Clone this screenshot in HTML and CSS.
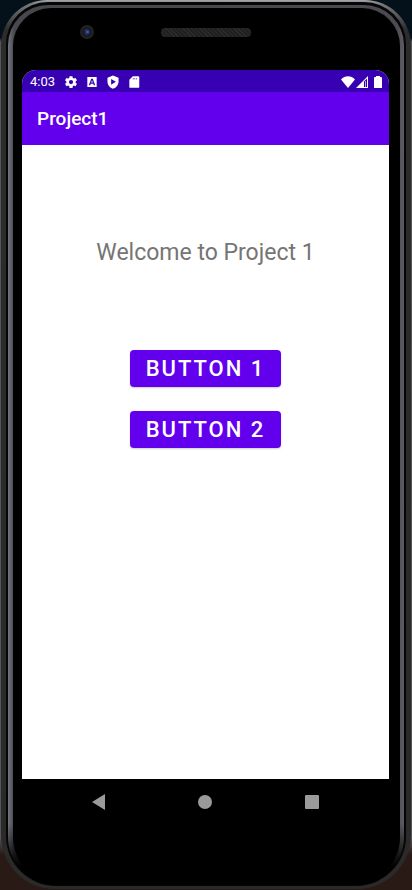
FILE: index.html
```html
<!DOCTYPE html>
<html lang="en">
<head>
<meta charset="utf-8">
<meta name="viewport" content="width=device-width, initial-scale=1">
<title>Project1</title>
<link rel="stylesheet" href="styles.css">
</head>
<body>
<div class="shell">
  <div class="groove">
    <div class="rim">
      <div class="face">
        <div class="earpiece">
          <svg class="camera" width="16" height="16" viewBox="0 0 16 16" aria-hidden="true">
            <circle cx="8" cy="8" r="7" fill="#222224"/>
            <circle cx="8" cy="8" r="4.600" fill="#141623"/>
            <circle cx="8" cy="8" r="3.200" fill="#1f2a52"/>
            <circle cx="8.400" cy="8" r="1.400" fill="#4a5790"/>
          </svg>
          <span class="speaker"></span>
        </div>
        <div class="screen">
          <div class="status">
            <span class="time">4:03</span>
            <div class="notices">
              <svg width="14" height="14" viewBox="0 0 24 24" aria-hidden="true"><path fill="#fff" fill-rule="evenodd" d="M9.500 2h5l.6 3 1.800 1 2.900-1 2.400 4.200-2.300 2v1.900l2.300 2-2.400 4.100-2.900-1-1.800 1-.6 3h-5l-.6-3-1.800-1-2.900 1-2.400-4.100 2.300-2v-1.900l-2.300-2 2.400-4.200 2.900 1 1.800-1zM12 8.500a3.600 3.600 0 1 0 0 7.200 3.600 3.600 0 0 0 0-7.200z"/></svg>
              <svg width="14" height="14" viewBox="0 0 24 24" aria-hidden="true"><path fill="#fff" fill-rule="evenodd" d="M4 3.500h16v17H4zM10.700 6.500 6.500 17.500h2.400l.9-2.500h4.400l.9 2.500h2.400L13.300 6.500zM12 9l1.500 4h-3z"/></svg>
              <svg width="14" height="14" viewBox="0 0 24 24" aria-hidden="true"><path fill="#fff" fill-rule="evenodd" d="M12 1 21.500 4.500V11c0 6-4 10.500-9.500 12.500C6.500 21.500 2.500 17 2.500 11V4.500zM8.800 6.800v9.800L17 11.700z"/></svg>
              <svg width="14" height="14" viewBox="0 0 24 24" aria-hidden="true"><path fill="#fff" fill-rule="evenodd" d="M10 2h9.500a1.500 1.500 0 0 1 1.500 1.500v17a1.500 1.500 0 0 1-1.500 1.500h-14A1.500 1.500 0 0 1 4 20.500V8zM10 5v2.500H11V5zM13 5v2.500h1V5zM16 5v2.500h1V5z"/></svg>
            </div>
            <div class="signals">
              <svg width="14" height="12" viewBox="0 0 14 12" aria-hidden="true"><path fill="#fff" d="M0 3.500C4-.8 10-.8 14 3.500L7 12z"/></svg>
              <svg width="12" height="12" viewBox="0 0 12 12" aria-hidden="true"><path fill="#fff" d="M0 12 12 0v12z"/><path fill="#3700b3" d="M8 5.500 11 2.500V11H8z"/><path fill="#fff" d="M9 5h1v6H9z" opacity=".65"/></svg>
              <svg class="battery" width="8" height="12" viewBox="0 0 8 12" aria-hidden="true"><path fill="#fff" d="M2 0h4v1h1q1 0 1 1v10H0V2q0-1 1-1h1z"/></svg>
            </div>
          </div>
          <header class="appbar"><h1>Project1</h1></header>
          <main class="content">
            <p class="welcome">Welcome to Project 1</p>
            <button class="action" type="button">BUTTON 1</button>
            <button class="action" type="button">BUTTON 2</button>
          </main>
        </div>
        <nav class="softkeys" aria-label="System navigation">
          <button type="button" aria-label="Back"><svg width="16" height="16" viewBox="0 0 16 16"><path fill="#9a9a9a" d="M1 8 14 0v16z"/></svg></button>
          <button type="button" aria-label="Home"><svg width="16" height="16" viewBox="0 0 16 16"><circle cx="8" cy="8" r="7" fill="#9a9a9a"/></svg></button>
          <button type="button" aria-label="Recent apps"><svg width="16" height="16" viewBox="0 0 16 16"><rect x="1" y="1" width="14" height="14" rx="1" fill="#9a9a9a"/></svg></button>
        </nav>
      </div>
    </div>
  </div>
</div>
</body>
</html>
```
FILE: styles.css
```css
* { box-sizing: border-box; }

body {
  margin: 0;
  min-height: 100vh;
  padding: 0 1px 1px;
  display: flex;
  font-family: Roboto, "Liberation Sans", sans-serif;
  background: linear-gradient(#04101a 0, #04101a 38px, #55565a 42px, #55565a 94%, #2a1a15 96%);
}

.shell, .groove, .rim, .face {
  flex: 1;
  display: flex;
  flex-direction: column;
}

.shell {
  padding: 2px 5px 3px;
  border-radius: 46px 46px 54px 54px;
  background: linear-gradient(#a4a6a8 0, #77797b 4px, #2c2c2d 30px, #2a2a2b);
}

.groove {
  padding: 3px 2px 1px;
  border-radius: 42px 42px 50px 50px;
  background: #050506;
}

.rim {
  padding: 3px 4px 0 5px;
  border-radius: 40px 40px 48px 48px;
  background:
    linear-gradient(transparent 93%, #000 98%),
    linear-gradient(90deg, #70747b 0, #55585e 4px, #46484d 6px, #46484d 50%, #4a4a50 98%, #5c5c62);
}

.face {
  padding: 0 11px 0 9px;
  border-radius: 38px 38px 48px 48px;
  background: #000;
}

.earpiece {
  height: 62px;
  display: grid;
  grid-template-columns: 1fr 90px 1fr;
  align-items: center;
  padding: 0 0 14px 1px;
}

.camera { margin-left: 56px; }

.speaker {
  height: 9px;
  border-radius: 4px;
  background: repeating-linear-gradient(45deg, #2c2c2c 0 1px, #202020 1px 3px);
}

.screen {
  flex: 1;
  display: flex;
  flex-direction: column;
  overflow: hidden;
  border-radius: 14px 14px 0 0;
  background: #fff;
}

.status {
  height: 22px;
  display: flex;
  align-items: center;
  padding: 1px 7px 0 8px;
  color: #fff;
  background: #3700b3;
}

.time { font-size: 13px; line-height: 22px; }

.notices { display: flex; gap: 7px; margin-left: 9px; }

.signals { display: flex; gap: 1px; margin-left: auto; }

.battery { margin-left: 5px; }

.appbar {
  height: 53px;
  display: flex;
  align-items: center;
  padding: 1px 15px 0;
  color: #fff;
  background: #6200ee;
}

.appbar h1 { margin: 0; font-size: 19px; font-weight: 500; line-height: 24px; }

.content {
  flex: 1;
  display: flex;
  flex-direction: column;
  align-items: center;
  gap: 24px;
  padding-top: 94px;
}

.welcome {
  margin: 0 0 59px;
  font-size: 23px;
  line-height: 28px;
  color: #757575;
}

.action {
  height: 37px;
  padding: 1px 16px 0;
  border: 0;
  border-radius: 4px;
  font: 500 22px/36px Roboto, "Liberation Sans", sans-serif;
  letter-spacing: 2px;
  color: #fff;
  background: #6200ee;
  box-shadow: 0 1px 2px rgba(0, 0, 0, .2);
}

.softkeys {
  height: 106px;
  display: grid;
  grid-template-columns: repeat(3, 1fr);
  align-items: start;
  justify-items: center;
  padding: 15px 24px 0;
}

.softkeys button { padding: 0; border: 0; background: none; }

.softkeys svg { display: block; }
```
